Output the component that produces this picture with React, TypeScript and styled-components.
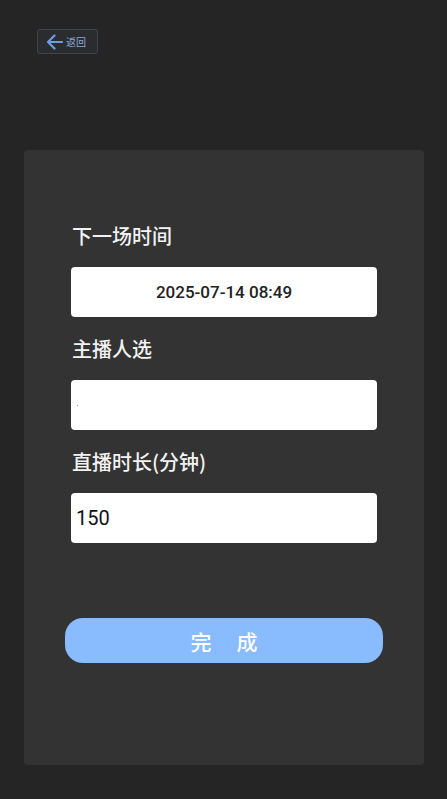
import React from "react";
import styled, { createGlobalStyle } from "styled-components";

const Global = createGlobalStyle`
  html, body { margin: 0; padding: 0; background: #252525; }
  body { font-family: Roboto, "Noto Sans CJK SC", sans-serif; }
  * { box-sizing: border-box; }
`;

const Page = styled.div`
  min-height: 799px;
  background: #252525;
  padding: 29px 0 0 24px;
  display: flex;
  flex-direction: column;
  align-items: flex-start;
`;

const BackButton = styled.button`
  margin-left: 13px;
  width: 61px;
  height: 25px;
  display: flex;
  align-items: center;
  gap: 3px;
  padding: 0 0 0 8px;
  background: #2a2c30;
  border: 1px solid #40444c;
  border-radius: 3px;
  color: #8aa9d6;
  font-family: "Noto Sans CJK SC", sans-serif;
  font-size: 10px;
  cursor: pointer;
`;

const Card = styled.section`
  margin-top: 96px;
  width: 400px;
  height: 615px;
  background: #333333;
  border-radius: 4px;
  padding-top: 75px;
  display: flex;
  flex-direction: column;
  align-items: center;
`;

const Field = styled.div`
  width: 306px;
  display: flex;
  flex-direction: column;
  margin-bottom: 21px;
`;

const Label = styled.div`
  height: 22px;
  line-height: 22px;
  font-family: "Noto Sans CJK SC", sans-serif;
  font-size: 20px;
  font-weight: 500;
  color: #f2f2f2;
  margin-bottom: 20px;
  padding-left: 1px;
`;

const Input = styled.div<{ $center?: boolean; $big?: boolean }>`
  height: 50px;
  background: #ffffff;
  border-radius: 4px;
  display: flex;
  align-items: center;
  justify-content: ${(p) => (p.$center ? "center" : "flex-start")};
  padding-left: ${(p) => (p.$center ? "0" : "5px")};
  font-family: Roboto, sans-serif;
  font-size: ${(p) => (p.$big ? "20px" : "17px")};
  font-weight: ${(p) => (p.$big ? 400 : 500)};
  color: ${(p) => (p.$big ? "#111" : "#222")};
`;

const Caret = styled.span`
  width: 1px;
  height: 1px;
  background: #999;
  margin-left: 1px;
`;

const Submit = styled.button`
  margin-top: 54px;
  width: 318px;
  height: 45px;
  border: none;
  border-radius: 18px;
  background: #88bbff;
  color: #ffffff;
  font-family: "Noto Sans CJK SC", sans-serif;
  font-size: 21px;
  font-weight: 500;
  display: flex;
  align-items: center;
  justify-content: center;
  gap: 25px;
  cursor: pointer;
`;

export default function App() {
  return (
    <>
      <Global />
      <Page>
        <BackButton>
          <svg width="17" height="16" viewBox="0 0 17 16" fill="none">
            <path
              d="M16 8H2M8.5 1.5L2 8l6.5 6.5"
              stroke="#6f9be0"
              strokeWidth="2.2"
              strokeLinecap="round"
              strokeLinejoin="round"
            />
          </svg>
          <span>返回</span>
        </BackButton>
        <Card>
          <Field>
            <Label>下一场时间</Label>
            <Input $center>2025-07-14 08:49</Input>
          </Field>
          <Field>
            <Label>主播人选</Label>
            <Input>
              <Caret />
            </Input>
          </Field>
          <Field>
            <Label>直播时长(分钟)</Label>
            <Input $big>150</Input>
          </Field>
          <Submit>
            <span>完</span>
            <span>成</span>
          </Submit>
        </Card>
      </Page>
    </>
  );
}
